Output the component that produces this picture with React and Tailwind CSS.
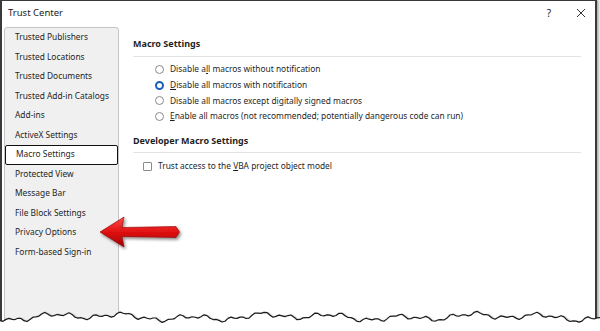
import React from "react";

const items = [
  "Trusted Publishers",
  "Trusted Locations",
  "Trusted Documents",
  "Trusted Add-in Catalogs",
  "Add-ins",
  "ActiveX Settings",
  "Macro Settings",
  "Protected View",
  "Message Bar",
  "File Block Settings",
  "Privacy Options",
  "Form-based Sign-in",
];

function Radio({ checked }) {
  return checked ? (
    <span className="w-[9px] h-[9px] rounded-full border-[2.5px] border-[#1a5fb4] bg-white shrink-0" />
  ) : (
    <span className="w-[9px] h-[9px] rounded-full border border-[#8a8a8a] bg-white shrink-0" />
  );
}

function tornPoints() {
  const pts = [];
  for (let x = 0; x <= 600; x += 3) {
    const y =
      317 +
      2.2 * Math.sin(x * 0.09) +
      1.6 * Math.sin(x * 0.23 + 1.3) +
      1.2 * Math.sin(x * 0.51 + 0.7) +
      1.5 * Math.sin(x * 0.031 + 2);
    pts.push([x, y]);
  }
  return pts;
}

export default function App() {
  const pts = tornPoints();
  const line = pts.map((p) => p.join(",")).join(" ");
  const fill = "0,331 " + line + " 600,331";
  return (
    <div className="relative w-[600px] h-[331px] bg-white overflow-hidden" style={{ fontFamily: '"Noto Sans", "Open Sans", sans-serif' }}>
      <div className="w-[597px] h-[331px] flex flex-col border-l-2 border-t border-r-2 border-[#3a3a3a] bg-white shadow-[2px_0_2px_rgba(0,0,0,0.3)]">
        <div className="h-[26px] flex items-center pl-[6px] pr-[9px] text-[9.5px] text-[#1a1a1a] shrink-0 pb-[2px]">
          <span className="flex-1">Trust Center</span>
          <span className="w-[12px] text-center mr-[21px] text-[10px]">?</span>
          <svg width="10" height="10" viewBox="0 0 10 10" className="shrink-0">
            <path d="M1 1 L9 9 M9 1 L1 9" stroke="#333" strokeWidth="1" fill="none" />
          </svg>
        </div>
        <div className="flex flex-1 pl-[2px]">
          <div className="w-[115px] bg-[#f0f0f0] border border-[#c4c4c4] rounded-t-[3px] flex flex-col shrink-0">
            {items.map((t) => (
              <div
                key={t}
                className={
                  "h-[19.5px] flex items-center pl-[10px] text-[8.4px] text-[#1f1f1f] " +
                  (t === "Macro Settings" ? "border border-[#111] rounded-[2px] bg-white" : "")
                }
              >
                {t}
              </div>
            ))}
          </div>
          <div className="flex-1 pl-[14px] pr-[14px] pt-[10px] text-[8.4px] text-[#1f1f1f]">
            <div className="font-bold text-[9px] pb-[5px] border-b border-[#e2e2e2]">Macro Settings</div>
            <div className="pl-[22px] pt-[7px] flex flex-col gap-[3.7px]">
              <label className="flex items-center gap-[6px] h-[12px]">
                <Radio />
                <span>Disable a<u>l</u>l macros without notification</span>
              </label>
              <label className="flex items-center gap-[6px] h-[12px]">
                <Radio checked />
                <span><u>D</u>isable all macros with notification</span>
              </label>
              <label className="flex items-center gap-[6px] h-[12px]">
                <Radio />
                <span>Disable all macros except di<u>g</u>itally signed macros</span>
              </label>
              <label className="flex items-center gap-[6px] h-[12px]">
                <Radio />
                <span><u>E</u>nable all macros (not recommended; potentially dangerous code can run)</span>
              </label>
            </div>
            <div className="font-bold text-[9px] pt-[11px] pb-[5px] border-b border-[#e2e2e2]">Developer Macro Settings</div>
            <div className="pl-[10px] pt-[7px]">
              <label className="flex items-center gap-[6px] h-[12px]">
                <span className="w-[9px] h-[9px] border border-[#8a8a8a] rounded-[1px] bg-white shrink-0" />
                <span>Trust access to the <u>V</u>BA project object model</span>
              </label>
            </div>
          </div>
        </div>
      </div>

      <svg className="absolute left-0 top-0" width="600" height="331" viewBox="0 0 600 331">
        <defs>
          <linearGradient id="ag" x1="0" y1="0" x2="0" y2="1">
            <stop offset="0" stopColor="#ff4a4a" />
            <stop offset="0.5" stopColor="#e01010" />
            <stop offset="1" stopColor="#a00000" />
          </linearGradient>
          <filter id="sh" x="-20%" y="-40%" width="140%" height="180%">
            <feDropShadow dx="1.5" dy="2" stdDeviation="1.5" floodColor="#000" floodOpacity="0.45" />
          </filter>
          <filter id="tb" x="-5%" y="-50%" width="110%" height="200%">
            <feGaussianBlur stdDeviation="1.2" />
          </filter>
        </defs>
        <polygon
          points="100,232 124,217 122,227.5 176,226.5 179.5,232 176,237.5 122,236.5 124,247"
          fill="url(#ag)"
          stroke="#8a0000"
          strokeWidth="0.6"
          strokeLinejoin="round"
          filter="url(#sh)"
        />
        <polyline points={line} fill="none" stroke="#777" strokeWidth="2.5" transform="translate(1,2)" filter="url(#tb)" />
        <polygon points={fill} fill="#ffffff" />
        <polyline points={line} fill="none" stroke="#1a1a1a" strokeWidth="1.2" strokeLinejoin="round" />
      </svg>
    </div>
  );
}
